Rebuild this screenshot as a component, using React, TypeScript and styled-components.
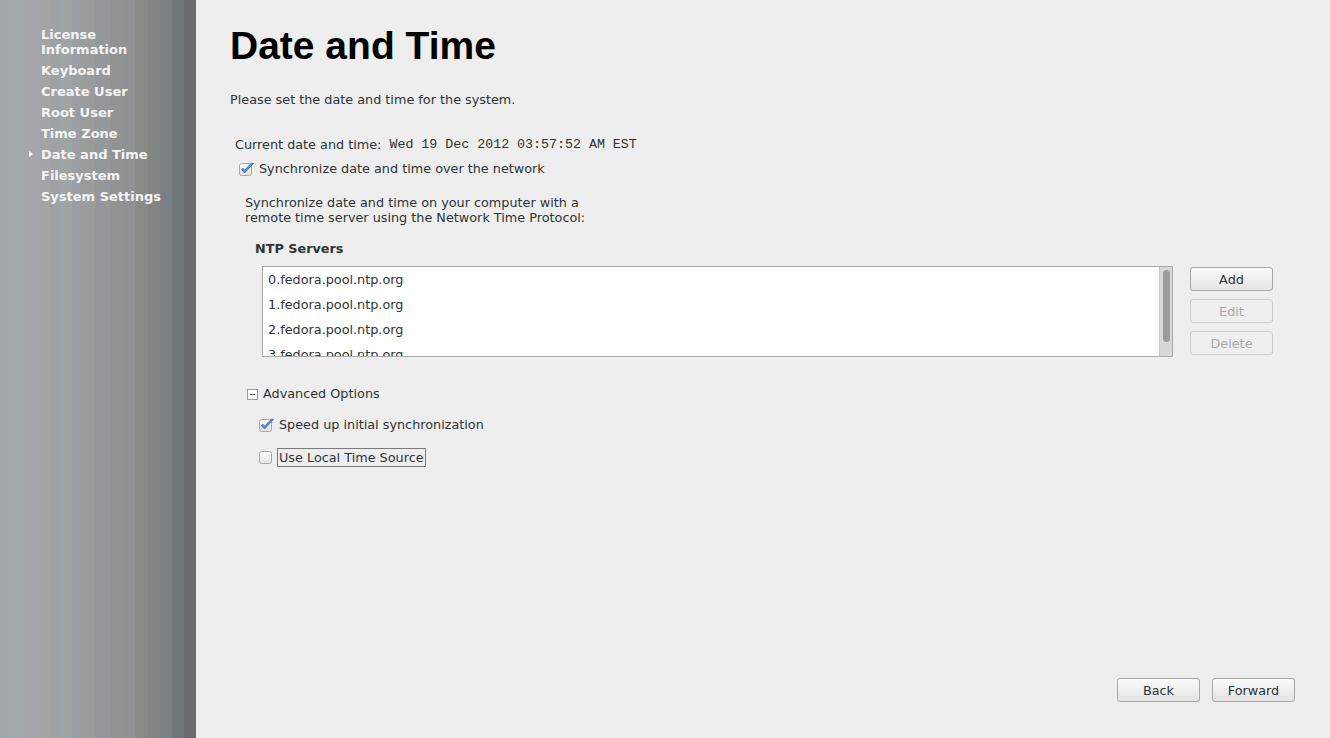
import React from "react";
import styled, { createGlobalStyle } from "styled-components";

const GlobalStyle = createGlobalStyle`
  html, body {
    margin: 0;
    padding: 0;
    height: 100%;
    overflow: hidden;
  }
  body {
    font-family: "DejaVu Sans", "Liberation Sans", sans-serif;
    background: #eeeeee;
  }
`;

const sidebarItems = [
  "License Information",
  "Keyboard",
  "Create User",
  "Root User",
  "Time Zone",
  "Date and Time",
  "Filesystem",
  "System Settings",
];

const servers = [
  "0.fedora.pool.ntp.org",
  "1.fedora.pool.ntp.org",
  "2.fedora.pool.ntp.org",
  "3.fedora.pool.ntp.org",
];

const CheckBox: React.FC<{ checked?: boolean }> = ({ checked }) => (
  <svg width="16" height="15" viewBox="0 0 16 15">
    <defs>
      <linearGradient id="cbg" x1="0" y1="0" x2="0" y2="1">
        <stop offset="0" stopColor="#ffffff" />
        <stop offset="1" stopColor="#e2e2e2" />
      </linearGradient>
    </defs>
    <rect x="0.5" y="1.5" width="12" height="12" rx="2" fill="url(#cbg)" stroke="#a8a8a8" />
    {checked && (
      <path
        d="M2.5 7.5 L5.5 11 L14.5 1.5 L12.5 1 L5.5 8.2 L4 6.3 Z"
        fill="#5b8fdc"
        stroke="#3566b0"
        strokeWidth="0.8"
        strokeLinejoin="round"
      />
    )}
  </svg>
);

const App: React.FC = () => {
  return (
    <>
      <GlobalStyle />
      <Page>
        <Sidebar>
          {sidebarItems.map((item) => (
            <NavItem key={item} $active={item === "Date and Time"}>
              {item === "Date and Time" && <Arrow />}
              {item === "License Information" ? (
                <>
                  License
                  <br />
                  Information
                </>
              ) : (
                item
              )}
            </NavItem>
          ))}
        </Sidebar>
        <Main>
          <Title>Date and Time</Title>
          <Intro>Please set the date and time for the system.</Intro>

          <CurrentRow>
            <span>Current date and time:</span>
            <Mono>Wed 19 Dec 2012 03:57:52 AM EST</Mono>
          </CurrentRow>

          <CheckRow $indent={9} $top={8}>
            <CheckBox checked />
            <span>Synchronize date and time over the network</span>
          </CheckRow>

          <Para>
            Synchronize date and time on your computer with a
            <br />
            remote time server using the Network Time Protocol:
          </Para>

          <SectionLabel>NTP Servers</SectionLabel>

          <ServerArea>
            <ServerList>
              <ServerItems>
                {servers.map((s) => (
                  <ServerRow key={s}>{s}</ServerRow>
                ))}
              </ServerItems>
              <ScrollTrack>
                <ScrollThumb />
              </ScrollTrack>
            </ServerList>
            <SideButtons>
              <Button>Add</Button>
              <Button disabled>Edit</Button>
              <Button disabled>Delete</Button>
            </SideButtons>
          </ServerArea>

          <ExpanderRow>
            <Expander />
            <span>Advanced Options</span>
          </ExpanderRow>

          <CheckRow $indent={29} $top={15}>
            <CheckBox checked />
            <span>Speed up initial synchronization</span>
          </CheckRow>

          <CheckRow $indent={29} $top={15}>
            <CheckBox />
            <FocusLabel>Use Local Time Source</FocusLabel>
          </CheckRow>

          <Footer>
            <Button>Back</Button>
            <Button>Forward</Button>
          </Footer>
        </Main>
      </Page>
    </>
  );
};

const Page = styled.div`
  display: flex;
  width: 1330px;
  height: 738px;
`;

const Sidebar = styled.nav`
  width: 196px;
  flex-shrink: 0;
  box-sizing: border-box;
  padding: 27px 0 0 41px;
  display: flex;
  flex-direction: column;
  gap: 6px;
  background: linear-gradient(
    to right,
    #a3a8a9 0px,
    #a3a8a9 14px,
    #a5a9ab 14px,
    #a5a9ab 20px,
    #a6a6ab 20px,
    #a6a6ab 40px,
    #a4a4a4 40px,
    #a4a4a4 50px,
    #a0a1a3 50px,
    #a0a1a3 60px,
    #9fa5a7 60px,
    #9fa5a7 72px,
    #9a9fa6 72px,
    #9a9fa6 80px,
    #9a9b9b 80px,
    #9a9b9b 95px,
    #95989b 95px,
    #95989b 110px,
    #939394 110px,
    #939394 122px,
    #8f9192 122px,
    #8f9192 135px,
    #898b88 135px,
    #898b88 148px,
    #838484 148px,
    #838484 160px,
    #7a7f84 160px,
    #7a7f84 172px,
    #727779 172px,
    #727779 184px,
    #6b6b6d 184px,
    #6b6b6d 196px
  );
`;

const NavItem = styled.div<{ $active?: boolean }>`
  position: relative;
  color: #f4f4f4;
  font-family: "DejaVu Sans", sans-serif;
  font-weight: bold;
  font-size: 13px;
  line-height: 15px;
`;

const Arrow = styled.span`
  position: absolute;
  left: -12px;
  top: 4px;
  width: 0;
  height: 0;
  border-top: 3.5px solid transparent;
  border-bottom: 3.5px solid transparent;
  border-left: 4px solid #ffffff;
`;

const Main = styled.main`
  flex: 1;
  display: flex;
  flex-direction: column;
  box-sizing: border-box;
  padding: 23px 35px 36px 34px;
  color: #2e3436;
  font-size: 12.8px;
  background: #eeeeee;
`;

const Title = styled.h1`
  margin: 0;
  font-family: "Liberation Sans", Arial, sans-serif;
  font-weight: bold;
  font-size: 39px;
  line-height: 46px;
  color: #000000;
`;

const Intro = styled.p`
  margin: 23px 0 0;
  line-height: 16px;
`;

const CurrentRow = styled.div`
  margin: 29px 0 0 5px;
  display: flex;
  gap: 8px;
  line-height: 16px;
`;

const Mono = styled.span`
  font-family: "Liberation Mono", "Courier New", monospace;
  font-size: 13.3px;
`;

const CheckRow = styled.div<{ $indent: number; $top: number }>`
  margin: ${(p) => p.$top}px 0 0 ${(p) => p.$indent}px;
  display: flex;
  align-items: center;
  gap: 4px;
  line-height: 16px;
  svg {
    flex-shrink: 0;
  }
`;

const FocusLabel = styled.span`
  border: 1px solid #7a7a7a;
  padding: 0 1px;
  line-height: 17px;
  margin-left: -2px;
`;

const Para = styled.p`
  margin: 18px 0 0 15px;
  line-height: 15px;
`;

const SectionLabel = styled.div`
  margin: 16px 0 0 25px;
  font-weight: bold;
  line-height: 16px;
`;

const ServerArea = styled.div`
  margin: 9px 22px 0 32px;
  display: flex;
  gap: 17px;
  align-items: flex-start;
`;

const ServerList = styled.div`
  flex: 1;
  height: 91px;
  box-sizing: border-box;
  border: 1px solid #a9a9a9;
  background: #ffffff;
  display: flex;
  overflow: hidden;
`;

const ServerItems = styled.div`
  flex: 1;
  padding: 4px 0 0 5px;
`;

const ServerRow = styled.div`
  height: 25px;
  line-height: 17px;
`;

const ScrollTrack = styled.div`
  width: 13px;
  background: #d8d8d8;
  border-left: 1px solid #c8c8c8;
  padding: 3px 3px;
  box-sizing: border-box;
`;

const ScrollThumb = styled.div`
  width: 7px;
  height: 72px;
  border-radius: 4px;
  background: #9c9c9c;
`;

const SideButtons = styled.div`
  display: flex;
  flex-direction: column;
  gap: 8px;
  padding-top: 1px;
`;

const Button = styled.button`
  width: 83px;
  height: 24px;
  box-sizing: border-box;
  border: 1px solid #a7a7a7;
  border-radius: 3px;
  background: linear-gradient(to bottom, #fafafa, #e4e4e4);
  font-family: "DejaVu Sans", sans-serif;
  font-size: 12.8px;
  color: #2e3436;
  padding: 0;
  &:disabled {
    border-color: #cbcbcb;
    background: #efefef;
    color: #a8a8a8;
  }
`;

const ExpanderRow = styled.div`
  margin: 29px 0 0 17px;
  display: flex;
  align-items: center;
  gap: 5px;
  line-height: 16px;
`;

const Expander = styled.span`
  position: relative;
  width: 9px;
  height: 9px;
  border: 1px solid #9a9a9a;
  background: #ffffff;
  &::after {
    content: "";
    position: absolute;
    left: 2px;
    right: 2px;
    top: 4px;
    height: 1px;
    background: #555555;
  }
`;

const Footer = styled.div`
  margin-top: auto;
  display: flex;
  justify-content: flex-end;
  gap: 12px;
`;

export default App;
